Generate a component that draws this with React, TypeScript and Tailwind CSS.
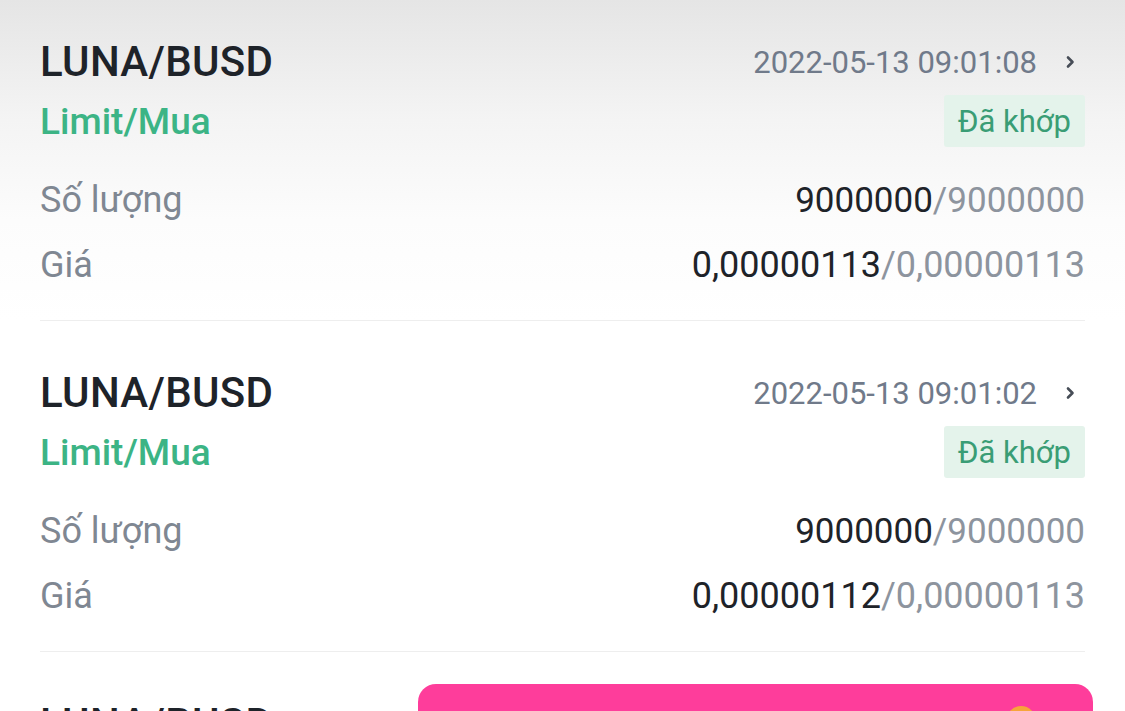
const ORDERS = [
  { pair: "LUNA/BUSD", type: "Limit/Mua", time: "2022-05-13 09:01:08", filled: "9000000", amount: "9000000", avgPrice: "0,00000113", price: "0,00000113" },
  { pair: "LUNA/BUSD", type: "Limit/Mua", time: "2022-05-13 09:01:02", filled: "9000000", amount: "9000000", avgPrice: "0,00000112", price: "0,00000113" },
  { pair: "LUNA/BUSD", type: "Limit/Mua", time: "2022-05-13 09:00:57", filled: "9000000", amount: "9000000", avgPrice: "0,00000112", price: "0,00000112" },
];

function Chevron() {
  return (
    <svg width="20" height="20" viewBox="0 0 20 20" className="ml-[23px] mr-[5px] text-[#474d57]">
      <path d="M8 5.5 L12.5 10 L8 14.5" fill="none" stroke="currentColor" strokeWidth="2.6" strokeLinecap="round" strokeLinejoin="round" />
    </svg>
  );
}

function OrderCard({ o }: { o: (typeof ORDERS)[number] }) {
  return (
    <div>
      <div className="flex items-center justify-between h-[52px]">
        <span className="text-[42px] font-medium text-[#1e2329] leading-none tracking-[0.3px]">{o.pair}</span>
        <div className="flex items-center">
          <span className="text-[31px] text-[#707a8a] leading-none">{o.time}</span>
          <Chevron />
        </div>
      </div>

      <div className="flex items-center justify-between h-[52px] mt-[7px]">
        <span className="text-[37px] font-medium text-[#3cb485] leading-none">{o.type}</span>
        <span className="h-[52px] flex items-center px-[14px] rounded-[3px] bg-[#e4f3eb] text-[31px] text-[#3a9d75] leading-none">
          Đã khớp
        </span>
      </div>

      <div className="flex items-center justify-between h-[52px] mt-[27px]">
        <span className="text-[36px] text-[#7f8792] leading-none">Số lượng</span>
        <span className="text-[35px] leading-none">
          <span className="text-[#1e2329]">{o.filled}</span>
          <span className="text-[#8d949e]">/{o.amount}</span>
        </span>
      </div>

      <div className="flex items-center justify-between h-[52px] mt-[13px]">
        <span className="text-[36px] text-[#7f8792] leading-none">Giá</span>
        <span className="text-[36px] leading-none">
          <span className="text-[#1e2329]">{o.avgPrice}</span>
          <span className="text-[#8d949e]">/{o.price}</span>
        </span>
      </div>

      <div className="h-px bg-[#eeeeee] mt-[29px] mb-[46px]" />
    </div>
  );
}

export default function App() {
  return (
    <div
      className="relative w-[1125px] h-[711px] overflow-hidden px-[40px] pt-[36px] bg-[linear-gradient(to_bottom,#e5e5e5_0px,#f4f4f4_120px,#fcfcfc_220px,#ffffff_320px)]"
      style={{ fontFamily: "Roboto, 'Noto Sans', sans-serif" }}
    >
      {ORDERS.map((o, i) => (
        <OrderCard key={i} o={o} />
      ))}

      {/* pink toast overlapping the list */}
      <div className="absolute left-[418px] top-[684px] w-[675px] h-[90px] rounded-[18px] bg-[#fe3d9b]">
        <div className="absolute left-[588px] top-[22px] w-[30px] h-[30px] rounded-full bg-[#f7a53a]" />
      </div>
    </div>
  );
}
